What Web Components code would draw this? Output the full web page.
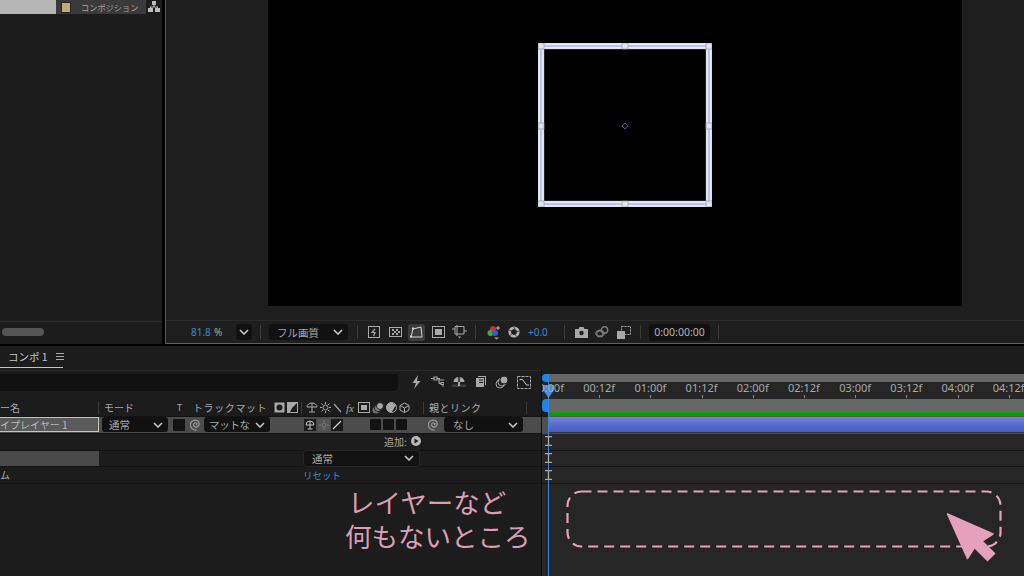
<!DOCTYPE html>
<html lang="ja">
<head>
<meta charset="utf-8">
<title>コンポ 1</title>
<style>
  html, body { margin: 0; width: 1024px; height: 576px; overflow: hidden; background: #000; }
  body { font: 10px "Noto Sans CJK JP", "Noto Sans", sans-serif; color: #a8a8a8; position: relative; }
  ae-app { width: 1024px; height: 576px; }
</style>
</head>
<body>
<ae-app></ae-app>

<script>
// shared drawing bits
const svg = (w, h, body, extra = "") =>
  `<svg width="${w}" height="${h}" viewBox="0 0 ${w} ${h}" fill="none" stroke="#a8a8a8" style="display:block;flex:none;${extra}">${body}</svg>`;

const chevron = `<svg width="10" height="6" viewBox="0 0 10 6" fill="none" stroke="#c4c4c4" stroke-width="1.600" style="display:block;flex:none"><path d="M1 1l4 4 4-4"/></svg>`;

const spiral = (s = 12) => `<svg width="${s}" height="${s}" viewBox="1 1.500 10 10" fill="none" stroke="#9a9a9a" stroke-width="1" style="display:block;flex:none"><path d="M6 6.500c.8 0 1.200-.9.6-1.500-.9-.8-2.600-.2-2.600 1.300 0 1.700 2.100 2.500 3.500 1.500 1.700-1.200 1.500-4-.4-5C4.800 1.800 1.500 3.200 1.300 6c-.2 2.800 2.300 5 5.200 4.700"/></svg>`;

class AeDropdown extends HTMLElement {
  constructor() {
    super();
    this.attachShadow({ mode: "open" }).innerHTML = `
      <style>
        :host {
          display: flex; align-items: center; justify-content: space-between;
          box-sizing: border-box; height: var(--h, 15px);
          padding: 0 5px 0 7px; background: #111; border-radius: 3px;
          color: #a8a8a8; font-size: 10.500px; white-space: nowrap; overflow: hidden; flex: none;
        }
      </style>
      <slot></slot>${chevron}`;
  }
}

class ProjectPanel extends HTMLElement {
  constructor() {
    super();
    this.attachShadow({ mode: "open" }).innerHTML = `
      <style>
        :host { display: flex; flex-direction: column; width: 162px; height: 344px; background: #1c1c1c; flex: none; }
        .head { display: flex; height: 14px; flex: none; }
        .light { width: 56px; background: #b6b6b6; }
        .tab { width: 90px; background: #3a3a3a; display: flex; align-items: center; padding-left: 6px; box-sizing: border-box; gap: 11px; font-size: 8.200px; color: #a4a4a4; }
        .swatch { width: 8px; height: 9px; background: #c2aa7c; box-shadow: 0 0 0 1px #262626; }
        .net { margin: 1px 0 0 2px; }
        .fill { flex: 1; }
        .scroll { height: 22px; border-top: 1px solid #2b2b2b; display: flex; align-items: center; padding: 0 0 0 2px; flex: none; }
        .thumb { width: 42px; height: 8px; border-radius: 4px; background: #555; margin-top: -2px; }
      </style>
      <div class="head">
        <div class="light"></div>
        <div class="tab"><span class="swatch"></span><span>コンポジション</span></div>
        <svg class="net" width="12" height="11" viewBox="0 0 12 11" fill="#bdbdbd"><rect x="4" y="0" width="4" height="4"/><rect x="0" y="7" width="5" height="4"/><rect x="7" y="7" width="5" height="4"/><path d="M5.500 4h1v1.500H10V7H9V6.500H3V7H2V5.500h3.500z"/></svg>
      </div>
      <div class="fill"></div>
      <div class="scroll"><div class="thumb"></div></div>`;
  }
}

class TransformBox extends HTMLElement {
  constructor() {
    super();
    // handles sit on the square's outline: corners, edge midpoints
    const pts = [[3,3],[87,3],[171,3],[3,83],[171,83],[3,161],[87,161],[171,161]];
    const handles = pts.map(([x, y]) => `<rect x="${x - 3}" y="${y - 3}" width="6" height="6" fill="#e2e4ec" stroke="#8d8f98" stroke-width=".6"/>`).join("");
    this.attachShadow({ mode: "open" }).innerHTML = `
      <style>:host { display: block; position: absolute; left: 371.500px; top: 43px; width: 174px; height: 164px; }</style>
      <svg width="174" height="164" viewBox="0 0 174 164" fill="none" style="display:block">
        <rect x="3" y="3" width="168" height="158" stroke="#b4b5bc" stroke-width="6.400"/>
        <rect x="3" y="3" width="168" height="158" stroke="#f4f5fa" stroke-width="5.400"/>
        <rect x="3" y="3" width="168" height="158" stroke="#b8c4f5" stroke-width="2.400"/>
        ${handles}
        <path d="M87 80l3 3-3 3-3-3z" stroke="#4a4ab0" stroke-width="1"/>
      </svg>`;
  }
}

class ViewerFooter extends HTMLElement {
  constructor() {
    super();
    const I = "#a8a8a8";
    this.attachShadow({ mode: "open" }).innerHTML = `
      <style>
        :host { display: flex; align-items: center; height: 22px; background: #1e1e1e; border-top: 1px solid #2b2b2b; font-size: 10px; color: #a8a8a8; flex: none; }
        .b { color: #3f86d6; }
        .d { width: 1px; height: 14px; background: #3a3a3a; flex: none; }
        ae-dropdown { --h: 16px; }
        .on { width: 17px; height: 17px; background: #3c3c3c; border-radius: 3px; display: flex; align-items: center; justify-content: center; flex: none; }
        .time { width: 61px; height: 17px; background: #111; border-radius: 3px; color: #b4b4b4; display: flex; align-items: center; justify-content: center; font: 10.500px "Noto Sans", sans-serif; flex: none; }
        .n { font: 10px "Noto Sans", sans-serif; }
      </style>
      <span class="n b" style="margin-left:25px;width:23px">81.8</span>
      <span class="n" style="width:22px">%</span>
      <ae-dropdown style="width:16px;padding:0 3px"></ae-dropdown>
      <span class="d" style="margin:0 8px"></span>
      <ae-dropdown style="width:79px;padding-left:8px">フル画質</ae-dropdown>
      <span class="d" style="margin:0 10px 0 9px"></span>
      ${svg(12, 12, `<rect x=".5" y=".5" width="11" height="11"/><path d="M7 3L4 6.500h3L5.500 10" stroke-width="1.200"/>`)}
      <span style="width:9px"></span>
      ${svg(13, 12, `<rect x=".5" y="1.500" width="12" height="9"/><path d="M3 3h2v2H3zM7 3h2v2H7zM5 5h2v2H5zM9 5h2v2H9zM3 7h2v2H3zM7 7h2v2H7z" fill="${I}" stroke="none"/>`)}
      <span style="width:6px"></span>
      <span class="on">${svg(13, 12, `<path d="M1 11L3 3l8-2 1 10z" stroke="#d4d4d4"/><rect x="0" y="9.500" width="2" height="2" fill="#d4d4d4" stroke="none"/><rect x="2" y="1.500" width="2" height="2" fill="#d4d4d4" stroke="none"/>`)}</span>
      <span style="width:7px"></span>
      ${svg(13, 12, `<rect x=".5" y=".5" width="12" height="11"/><rect x="3" y="3" width="7" height="6" fill="${I}" stroke="none"/>`)}
      <span style="width:7px"></span>
      ${svg(15, 14, `<path d="M3 1.500h9v7.500H3zM5 0v11M0 4h3M12 6h3"/><path d="M6 11.500h3l-1.500 2z" fill="${I}" stroke="none"/>`)}
      <span class="d" style="margin:0 11px 0 8px"></span>
      <svg width="14" height="15" viewBox="0 0 14 15" style="display:block;flex:none"><circle cx="6" cy="4" r="3" fill="#d23030"/><circle cx="3.500" cy="8" r="3" fill="#2fb23f"/><circle cx="8" cy="8" r="3" fill="#3558d8"/><path d="M11 1v4M9 3h4" stroke="#bbb"/><path d="M7 12.500h5l-2.500 2z" fill="#a8a8a8"/></svg>
      <span style="width:7px"></span>
      <svg width="12" height="12" viewBox="0 0 12 12" style="display:block;flex:none"><circle cx="6" cy="6" r="4.200" fill="none" stroke="#b4b4b4" stroke-width="2.800"/><path d="M6 3.500L8.500 5 8 8 5 8.600 3.400 6z" fill="#1e1e1e"/><path d="M6 1l1 3M11 5L8 6M8.500 10.500L6.800 8M2 9.500L4.500 7.500M1 4l3 1.200" stroke="#1e1e1e" stroke-width=".7"/></svg>
      <span class="n b" style="margin-left:8px;width:36px">+0.0</span>
      <span class="d" style="margin-right:10px"></span>
      <svg width="13" height="11" viewBox="0 0 13 11" style="display:block;flex:none"><path d="M0 2h3.500l1-2h4l1 2H13v9H0z" fill="#a8a8a8"/><circle cx="6.500" cy="6" r="2.200" fill="#1e1e1e"/></svg>
      <span style="width:7px"></span>
      ${svg(14, 12, `<circle cx="5" cy="7.500" r="3.200" stroke="#7c7c7c" stroke-width="1.400"/><circle cx="9.500" cy="4" r="3.200" stroke="#7c7c7c" stroke-width="1.400"/><ellipse cx="5" cy="7.500" rx="4.500" ry="2.500" stroke="#7c7c7c"/>`)}
      <span style="width:8px"></span>
      <svg width="14" height="13" viewBox="0 0 14 13" style="display:block;flex:none"><rect x="0" y="5" width="8" height="8" fill="#a8a8a8"/><rect x="4.500" y=".5" width="9" height="8" fill="none" stroke="#a8a8a8" stroke-dasharray="2 1"/></svg>
      <span class="d" style="margin:0 8px 0 9px"></span>
      <span class="time">0:00:00:00</span>
      <span class="d" style="margin-left:8px"></span>`;
  }
}

class CompViewer extends HTMLElement {
  constructor() {
    super();
    this.attachShadow({ mode: "open" }).innerHTML = `
      <style>
        :host { display: flex; flex-direction: column; flex: 1; height: 344px; box-sizing: border-box; background: #1e1e1e; border-left: 1.500px solid #2a62a0; border-bottom: 1.500px solid #2a6db0; position: relative; }
        .stage { flex: 1; display: flex; justify-content: flex-start; padding-left: 102px; padding-bottom: 14px; }
        .canvas { width: 694px; height: 306px; background: #000; }
      </style>
      <div class="stage"><div class="canvas"></div></div>
      <transform-box></transform-box>
      <viewer-footer></viewer-footer>`;
  }
}

class TlRow extends HTMLElement {
  constructor() {
    super();
    this.attachShadow({ mode: "open" }).innerHTML = `
      <style>
        :host { display: flex; align-items: center; box-sizing: border-box; height: var(--row, 16.750px); padding-bottom: 1px; border-bottom: 1px solid #131313; flex: none; position: relative; font-size: 10px; }
      </style>
      <slot></slot>`;
  }
}

class LayerPane extends HTMLElement {
  constructor() {
    super();
    const G = "#a8a8a8";
    this.attachShadow({ mode: "open" }).innerHTML = `
      <style>
        :host { display: flex; flex-direction: column; width: 542px; background: #1c1c1c; flex: none; }
        .rest { flex: 1; display: flex; flex-direction: column; border-right: 1px solid #0e0e0e; }
        .tabs { height: 24px; box-sizing: border-box; padding: 0 0 3px 8px; position: relative; display: flex; align-items: center; gap: 8px; font-size: 10.500px; color: #c4c4c4; flex: none; }
        .tabs::after { content: ""; position: absolute; left: 0; bottom: 2px; width: 63px; height: 1px; background: #c4c4c4; }
        .search { height: 30px; border-top: 1px solid #2a2a2a; box-sizing: border-box; display: flex; padding-top: 3px; flex: none; }
        .field { width: 398px; height: 17px; background: #101010; border-radius: 0 3px 3px 0; flex: none; }
        .tools { display: flex; gap: 8px; margin-left: 13px; margin-top: 1px; }
        .d { width: 1px; height: 12px; background: #3a3a3a; flex: none; }
        .sel { background: #4c4c4c; padding-bottom: 0; }
        .name { box-sizing: border-box; width: 99px; height: 15px; border: 1px solid #c4c4c4; border-left: 0; background: #5a5a5a; color: #bbb; display: flex; align-items: center; justify-content: flex-start; font-size: 10px; overflow: hidden; white-space: nowrap; flex: none; }
        .sq { width: 11px; height: 11px; background: #121212; border-radius: 1px; display: block; flex: none; }
        .blue { color: #3f86d6; }
        .fill { flex: 1; }
        .mini { width: 12px; height: 12px; display: flex; align-items: center; justify-content: center; flex: none; background: #1a1a1a; }
      </style>
      <div class="tabs"><span>コンポ 1</span>
        <svg width="8" height="7" viewBox="0 0 8 7" stroke="#a8a8a8"><path d="M0 .5h8M0 3.500h8M0 6.500h8"/></svg>
      </div>
      <div class="rest">
      <div class="search">
        <div class="field"></div>
        <div class="tools">
          ${svg(12, 14, `<path d="M8 0L2.500 8h3.500L4 14l6.500-8H7z" fill="${G}" stroke="none" transform="translate(-1)"/>`)}
          ${svg(13, 14, `<path d="M0 3.500h3M3 2h3v3H3zM6 3.500h3M8 3.500v5M8 8.500h2M10 7.500h3v2h-3zM8 5h5M11 11h2" stroke-width="1.200"/>`)}
          ${svg(14, 14, `<path d="M1.500 7a5.500 5 0 0 1 11 0z" fill="${G}" stroke="none"/><path d="M7 2v10" stroke="#1c1c1c" stroke-width="1.500"/><path d="M0 9.500h14V12H0z" fill="#3c3c3c" stroke="none"/><path d="M6 7h2v4H6z" fill="${G}" stroke="none"/>`)}
          ${svg(13, 14, `<rect x="3.500" y=".5" width="9" height="10" fill="${G}" stroke="#1c1c1c"/><rect x="1.500" y="2.500" width="9" height="10" fill="${G}" stroke="#1c1c1c"/><path d="M5 5h4M5 7.500h4" stroke="#1c1c1c"/>`)}
          ${svg(14, 14, `<circle cx="5" cy="9" r="4"/><circle cx="7" cy="7" r="4"/><circle cx="9" cy="5" r="4" fill="${G}" stroke="#1c1c1c"/>`)}
          ${svg(14, 14, `<rect x=".5" y="1.500" width="13" height="12" stroke-dasharray="3 1"/><path d="M2.500 4.500h3l4 5.500h2.500" stroke="#c8c8c8"/>`)}
        </div>
      </div>
      <tl-row style="--row:17px">
        <span style="width:98px">ー名</span><span class="d"></span>
        <span style="margin-left:5px;width:73px">モード</span>
        <span style="width:16px;font:9px 'Noto Sans',sans-serif">T</span>
        <span style="width:81px;letter-spacing:.6px">トラックマット</span>
        <span style="display:flex;gap:2px">
          ${svg(11, 11, `<rect x=".5" y=".5" width="10" height="10" fill="${G}" stroke="none"/><circle cx="5.500" cy="5.500" r="3" fill="#1c1c1c" stroke="none"/>`)}
          ${svg(11, 11, `<rect x=".5" y=".5" width="10" height="10" stroke-width="1"/><path d="M1 1h9L5 6 3 10H1z" fill="${G}" stroke="none"/>`)}
        </span>
        <span class="d" style="margin:0 4px 0 3px"></span>
        <span style="display:flex;gap:2px;align-items:center">
          ${svg(12, 11, `<path d="M1 5a5 4 0 0 1 10 0z" fill="none"/><path d="M6 1v9M3 10h6" />`)}
          ${svg(11, 11, `<circle cx="5.500" cy="5.500" r="2.500"/><path d="M5.500 0v2M5.500 9v2M0 5.500h2M9 5.500h2M1.500 1.500l1.500 1.500M8 8l1.500 1.500M9.500 1.500L8 3M3 8L1.500 9.500"/>`)}
          ${svg(9, 10, `<path d="M1 1l7 8" stroke-width="1.200"/>`)}
          <span style="font:italic 11px 'Liberation Serif',serif;width:12px;text-align:center">fx</span>
          ${svg(12, 11, `<rect x=".5" y=".5" width="11" height="10"/><rect x="3" y="3" width="6" height="5" fill="${G}" stroke="none"/>`)}
          ${svg(12, 12, `<circle cx="4" cy="8" r="3.500" fill="#6f6f6f" stroke="none"/><circle cx="6" cy="6" r="3.500" fill="#8c8c8c" stroke="#1c1c1c"/><circle cx="8" cy="4" r="3.500" fill="#a8a8a8" stroke="#1c1c1c"/>`)}
          ${svg(11, 11, `<circle cx="5.500" cy="5.500" r="5"/><path d="M5.500 .5a5 5 0 0 0 0 10L10 3z" fill="${G}" stroke="none"/>`)}
          ${svg(11, 11, `<path d="M5.500 1l4.500 2.500v4.500l-4.500 2.500L1 8V3.500zM1 3.500l4.500 2.500 4.500-2.500M5.500 6v4.500"/>`)}
        </span>
        <span class="d" style="margin:0 5px 0 13px"></span>
        <span style="width:97px;letter-spacing:.5px">親とリンク</span>
        <span class="d"></span>
      </tl-row>
      <tl-row class="sel">
        <span class="name">イプレイヤー 1</span>
        <ae-dropdown style="width:66px;margin-left:3px">通常</ae-dropdown>
        <span class="sq" style="width:12px;height:12px;margin-left:5px"></span>
        <span style="margin-left:5px">${spiral(12)}</span>
        <ae-dropdown style="width:66px;margin-left:2px;padding-left:5px;letter-spacing:-.3px">マットな</ae-dropdown>
        <span class="mini" style="margin-left:34px">${svg(10, 10, `<path d="M1 5a4 4 0 0 1 8 0zM5 1v8M2.500 9h5" stroke="#c0c0c0"/>`)}</span>
        <span class="mini" style="margin-left:2px;background:#555">${svg(10, 10, `<circle cx="5" cy="5" r="2" stroke="#7a7a7a"/><path d="M5 0v2M5 8v2M0 5h2M8 5h2" stroke="#7a7a7a"/>`)}</span>
        <span class="mini" style="margin-left:1px">${svg(10, 10, `<path d="M9 1L1 9" stroke="#d0d0d0" stroke-width="1.300"/>`)}</span>
        <span class="sq" style="margin-left:27px"></span>
        <span class="sq" style="margin-left:2px"></span>
        <span class="sq" style="margin-left:2px"></span>
        <span style="margin-left:21px">${spiral(12)}</span>
        <ae-dropdown style="width:79px;margin-left:4px;padding-left:9px">なし</ae-dropdown>
      </tl-row>
      <tl-row>
        <span style="margin-left:384px">追加:</span>
        <svg style="margin-left:4px;display:block" width="10" height="10" viewBox="0 0 10 10"><circle cx="5" cy="5" r="5" fill="#b8b8b8"/><path d="M3.500 2.500L7.500 5l-4 2.500z" fill="#1c1c1c"/></svg>
      </tl-row>
      <tl-row style="padding-bottom:0">
        <span style="width:99px;height:100%;background:#4a4a4a;flex:none"></span>
        <ae-dropdown style="width:115px;margin-left:205px;padding-left:8px;background:#121212;box-shadow:0 0 0 1px #262626">通常</ae-dropdown>
      </tl-row>
      <tl-row>
        <span>ム</span>
        <span class="blue" style="margin-left:293px;font-size:9.500px">リセット</span>
      </tl-row>
      <div class="fill"></div>
      </div>`;
  }
}

class TimeRuler extends HTMLElement {
  constructor() {
    super();
    const labels = ["00:00f", "00:12f", "01:00f", "01:12f", "02:00f", "02:12f", "03:00f", "03:12f", "04:00f", "04:12f"];
    const cells = labels.map((t) => `<span class="c">${t}</span>`).join("");
    this.attachShadow({ mode: "open" }).innerHTML = `
      <style>
        :host { display: flex; height: 16px; margin-left: -19.600px; flex: none; font: 11px "Noto Sans", sans-serif; color: #a8a8a8; }
        .c { width: 51.200px; flex: none; text-align: center; position: relative; line-height: 12px; white-space: nowrap; }
        .c::after { content: ""; position: absolute; left: 50%; bottom: 0; width: 1px; height: 3px; background: #8a8a8a; }
      </style>
      ${cells}`;
  }
}

class TimePane extends HTMLElement {
  constructor() {
    super();
    const beam = `<svg width="7" height="10" viewBox="0 0 7 10" stroke="#a8a8a8" stroke-width="1.300" style="display:block;margin-left:3px;position:relative;z-index:1"><path d="M0 .7h7M0 9.300h7M3.500.7v8.600"/></svg>`;
    this.attachShadow({ mode: "open" }).innerHTML = `
      <style>
        :host { display: flex; flex-direction: column; flex: 1; background: #262626; position: relative; overflow: hidden; min-width: 0; }
        .dark { background: #1c1c1c; flex: none; }
        .nav { height: 8px; background: #666; position: relative; margin-left: 5.500px; }
        .nav::before { content: ""; position: absolute; left: -5.500px; top: 0; width: 6px; height: 8px; background: #1487f0; border-radius: 4px 0 0 4px; }
        .ruler { height: 17px; position: relative; z-index: 2; background: none; flex: none; }
        .work { height: 13px; background: #666; position: relative; flex: none; margin-left: 5.500px; }
        .work::before { content: ""; position: absolute; left: -5.500px; top: 0; width: 6px; height: 13px; background: #1487f0; border-radius: 4px 0 0 4px; }
        .green { height: 5px; background: #0a9a0a; border-top: 1px solid #0a0; border-bottom: 1px solid #555; box-sizing: border-box; margin-left: 5.500px; flex: none; }
        .bar { height: 15px; flex: none; background: linear-gradient(#7385d8, #5468cf 60%, #4a5cc2); margin-left: 5.500px; border-bottom: 1px solid #333; }
        .barrow { background: #4f4f4f; height: 16.750px; flex: none; box-sizing: border-box; }
        .line { position: absolute; left: 6px; top: 28px; bottom: 0; width: 1px; background: #3a86d8; }
        .cap { position: absolute; left: 1px; top: 39px; width: 11px; height: 13px; z-index: 1; }
      </style>
      <div class="dark" style="height:28px"></div>
      <div class="dark" style="height:8px"><div class="nav"></div></div>
      <div class="dark ruler"><time-ruler></time-ruler></div>
      <div class="dark"><div class="work"></div><div class="green"></div></div>
      <div class="barrow"><div class="bar"></div></div>
      <tl-row>${beam}</tl-row>
      <tl-row>${beam}</tl-row>
      <tl-row>${beam}</tl-row>
      <div class="line"></div>
      <svg class="cap" viewBox="0 0 11 13"><path d="M0 0h11v5L5.500 13 0 5z" fill="#3f8fe6"/></svg>`;
  }
}

class TimelinePanel extends HTMLElement {
  constructor() {
    super();
    this.attachShadow({ mode: "open" }).innerHTML = `
      <style>
        :host { display: flex; height: 230px; position: relative; flex: none; background: #1c1c1c; }
      </style>
      <layer-pane></layer-pane>
      <time-pane></time-pane>
      <slot></slot>`;
  }
}

// the pink note that sits over the timeline
class EmptyAreaNote extends HTMLElement {
  constructor() {
    super();
    this.attachShadow({ mode: "open" }).innerHTML = `
      <style>
        :host { display: block; position: absolute; left: 0; top: 0; width: 1024px; height: 230px; pointer-events: none; }
        .txt { position: absolute; left: 345px; top: 139px; color: #d99db4; font: 400 26.500px/34px "Noto Sans CJK JP", sans-serif; white-space: nowrap; }
        .txt div:first-child { padding-left: 3px; }
        svg { position: absolute; left: 0; top: 0; }
      </style>
      <div class="txt"><div>レイヤーなど</div><div>何もないところ</div></div>
      <svg width="1024" height="230" viewBox="0 0 1024 230" fill="none">
        <rect x="567.500" y="145.500" width="433" height="55" rx="14" stroke="#e5a0bb" stroke-width="2.200" stroke-dasharray="10 6"/>
        <path d="M947.500 168l45.500 20-11 7 12.500 12.500-7 7-13-13-7 11z" fill="#e5a0bb" stroke="#e5a0bb" stroke-width="1.500" stroke-linejoin="round"/>
      </svg>`;
  }
}

class AeApp extends HTMLElement {
  constructor() {
    super();
    this.attachShadow({ mode: "open" }).innerHTML = `
      <style>
        :host { display: flex; flex-direction: column; background: #000; }
        .top { display: flex; height: 344px; gap: 3px; flex: none; }
        .sep { height: 2px; flex: none; }
      </style>
      <div class="top"><project-panel></project-panel><comp-viewer></comp-viewer></div>
      <div class="sep"></div>
      <timeline-panel><empty-area-note></empty-area-note></timeline-panel>`;
  }
}

customElements.define("ae-dropdown", AeDropdown);
customElements.define("project-panel", ProjectPanel);
customElements.define("transform-box", TransformBox);
customElements.define("viewer-footer", ViewerFooter);
customElements.define("comp-viewer", CompViewer);
customElements.define("tl-row", TlRow);
customElements.define("layer-pane", LayerPane);
customElements.define("time-ruler", TimeRuler);
customElements.define("time-pane", TimePane);
customElements.define("timeline-panel", TimelinePanel);
customElements.define("empty-area-note", EmptyAreaNote);
customElements.define("ae-app", AeApp);
</script>
</body>
</html>
